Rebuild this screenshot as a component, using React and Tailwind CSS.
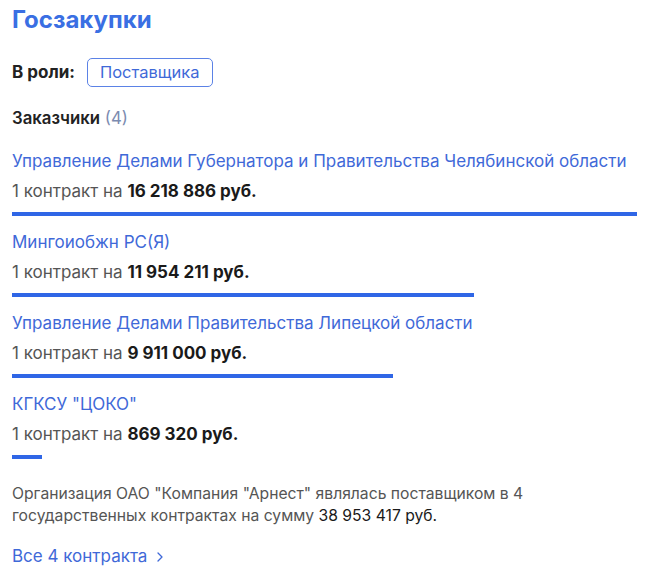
import React from "react";

const items = [
  { name: "Управление Делами Губернатора и Правительства Челябинской области", sum: "16 218 886 руб.", w: 625 },
  { name: "Мингоиобжн РС(Я)", sum: "11 954 211 руб.", w: 462 },
  { name: "Управление Делами Правительства Липецкой области", sum: "9 911 000 руб.", w: 381 },
  { name: "КГКСУ \"ЦОКО\"", sum: "869 320 руб.", w: 30 },
];

export default function App() {
  return (
    <div className="w-[646px] h-[575px] bg-white px-[12px] overflow-hidden" style={{ fontFamily: "Inter, 'Noto Sans', sans-serif" }}>
      <h1 className="text-[24px] leading-[40px] font-bold text-[#3a6fe3]">Госзакупки</h1>
      <div className="mt-[18px] flex items-center h-[29px]">
        <span className="text-[17px] font-bold text-[#222]">В роли:</span>
        <span className="ml-[12px] h-[29px] px-[12px] flex items-center border border-[#5b82e6] rounded-[5px] text-[16.5px] text-[#3f69d8]">Поставщика</span>
      </div>
      <div className="mt-[16px] leading-[30px] text-[16.8px]">
        <span className="font-semibold text-[#222]">Заказчики</span>
        <span className="text-[#7b8bb0]"> (4)</span>
      </div>
      <div className="mt-[13px] flex flex-col">
        {items.map((it, i) => (
          <div key={i} className="flex flex-col">
            <div className="leading-[30px] text-[17px] text-[#3f69d8] whitespace-nowrap">{it.name}</div>
            <div className="leading-[30px] text-[17px] text-[#555]">
              1 контракт на <span className="font-bold text-[#1a1a1a]">{it.sum}</span>
            </div>
            <div className="mt-[6px] h-[4px] bg-[#2f66e6]" style={{ width: it.w }} />
            <div className="h-[11px]" />
          </div>
        ))}
      </div>
      <p className="mt-[13px] text-[15.7px] leading-[22px] text-[#555]">
        Организация ОАО "Компания "Арнест" являлась поставщиком в 4
        <br />
        государственных контрактах на сумму <span className="text-[#1a1a1a]">38 953 417 руб.</span>
      </p>
      <div className="mt-[18px] leading-[22px] text-[17px] text-[#3f69d8] flex items-center">
        Все 4 контракта
        <svg className="ml-[9px] mt-[2px]" width="8" height="12" viewBox="0 0 8 12" fill="none">
          <path d="M2 2l4 4-4 4" stroke="#3f69d8" strokeWidth="1.3" strokeLinecap="round" strokeLinejoin="round" />
        </svg>
      </div>
    </div>
  );
}
